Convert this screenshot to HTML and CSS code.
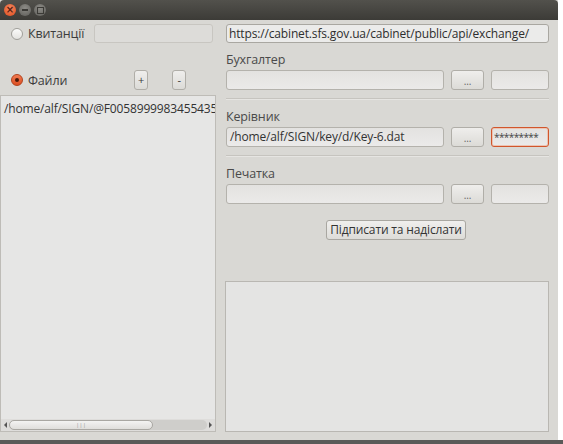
FILE: index.html
```html
<!DOCTYPE html>
<html>
<head>
<meta charset="utf-8">
<link rel="stylesheet" href="styles.css">
</head>
<body>
<div class="window">
  <div class="titlebar">
    <span class="tb-btn tb-close">×</span>
    <span class="tb-btn tb-min"><span class="tb-min-line"></span></span>
    <span class="tb-btn tb-max"><span class="tb-max-box"></span></span>
  </div>
  <div class="content">
    <div class="left">
      <div class="row-kv">
        <span class="radio"></span>
        <span class="radio-label">Квитанції</span>
        <span class="field field-kv"></span>
      </div>
      <div class="row-files">
        <span class="radio radio-on"><span class="radio-dot"></span></span>
        <span class="radio-label">Файли</span>
        <span class="small-btn btn-plus">+</span>
        <span class="small-btn btn-minus">-</span>
      </div>
      <div class="list">
        <div class="list-body">
          <div class="list-item">/home/alf/SIGN/@F0058999983455435</div>
        </div>
        <div class="hscroll">
          <span class="arrow arrow-left"></span>
          <div class="trough">
            <div class="thumb"><span class="grip">|||</span></div>
          </div>
          <span class="arrow arrow-right"></span>
        </div>
      </div>
    </div>
    <div class="right">
      <div class="field field-url">https://cabinet.sfs.gov.ua/cabinet/public/api/exchange/</div>
      <div class="label label-first">Бухгалтер</div>
      <div class="key-row">
        <div class="field field-path"></div>
        <div class="dots-btn">...</div>
        <div class="field field-pass"></div>
      </div>
      <div class="sep"></div>
      <div class="label">Керівник</div>
      <div class="key-row">
        <div class="field field-path">/home/alf/SIGN/key/d/Key-6.dat</div>
        <div class="dots-btn">...</div>
        <div class="field field-pass field-focus">*********</div>
      </div>
      <div class="sep"></div>
      <div class="label">Печатка</div>
      <div class="key-row">
        <div class="field field-path"></div>
        <div class="dots-btn">...</div>
        <div class="field field-pass"></div>
      </div>
      <div class="send-row">
        <div class="send-btn">Підписати та надіслати</div>
      </div>
      <div class="log"></div>
    </div>
  </div>
</div>
<div class="bottom-strip"></div>
</body>
</html>
```
FILE: styles.css
```css
html, body {
  margin: 0;
  padding: 0;
  background: #ffffff;
  width: 563px;
  height: 444px;
  overflow: hidden;
}
body {
  font-family: "Open Sans", "DejaVu Sans", sans-serif;
  font-size: 12px;
  letter-spacing: -0.15px;
  color: #3c3c3c;
}
.window {
  width: 558px;
  height: 440px;
  background: #d9d8d4;
  display: flex;
  flex-direction: column;
}
.bottom-strip {
  width: 563px;
  height: 4px;
  background: #5a5a58;
}
.titlebar {
  height: 20px;
  background: linear-gradient(#52514c, #3c3b37);
  display: flex;
  align-items: center;
  padding-left: 4px;
  gap: 3px;
  border-radius: 4px 4px 0 0;
}
.tb-btn {
  width: 12px;
  height: 12px;
  border-radius: 50%;
  display: flex;
  align-items: center;
  justify-content: center;
  box-sizing: border-box;
}
.tb-close {
  background: radial-gradient(circle at 50% 35%, #f48a62, #df4a1c);
  color: #5a2010;
  font-size: 10px;
  line-height: 12px;
  font-family: "DejaVu Sans", sans-serif;
  font-weight: bold;
  letter-spacing: 0;
}
.tb-min, .tb-max {
  background: radial-gradient(circle at 50% 35%, #8d8c87, #5e5d59);
}
.tb-min-line {
  width: 6px;
  height: 2px;
  background: #3b3a36;
}
.tb-max-box {
  width: 5px;
  height: 5px;
  border: 1px solid #3b3a36;
}
.content {
  flex: 1;
  display: flex;
}
.left {
  width: 216px;
  display: flex;
  flex-direction: column;
}
.row-kv {
  height: 19px;
  margin-top: 4px;
  display: flex;
  align-items: center;
  padding-left: 11px;
}
.radio {
  width: 12px;
  height: 12px;
  border-radius: 50%;
  border: 1px solid #a09f9a;
  background: linear-gradient(#fbfbfa, #e4e3e0);
  box-sizing: border-box;
  display: flex;
  align-items: center;
  justify-content: center;
  flex: none;
}
.radio-on {
  border-color: #b2421c;
  background: linear-gradient(#f27b52, #dc4f22);
}
.radio-dot {
  width: 4px;
  height: 4px;
  border-radius: 50%;
  background: #4a1a0a;
}
.radio-label {
  margin-left: 5px;
  font-size: 12.5px;
  color: #3c3c3c;
}
.field {
  box-sizing: border-box;
  border: 1px solid #b4b2ac;
  border-radius: 3px;
  background: linear-gradient(#e3e2e0, #ebeae9);
  height: 20px;
  line-height: 18px;
  padding: 0 3px;
  font-size: 12px;
  color: #333;
  white-space: nowrap;
  overflow: hidden;
}
.field-kv {
  margin-left: auto;
  margin-right: 3px;
  width: 119px;
  height: 19px;
  background: #dddcd9;
  border-color: #c8c6c1;
}
.row-files {
  height: 20px;
  margin-top: 27px;
  display: flex;
  align-items: center;
  padding-left: 11px;
}
.small-btn {
  box-sizing: border-box;
  width: 14px;
  height: 20px;
  border: 1px solid #b0aea8;
  border-radius: 3px;
  background: linear-gradient(#efeeec, #dcdbd7);
  font-size: 11px;
  line-height: 18px;
  text-align: center;
  color: #3a3a3a;
  letter-spacing: 0;
}
.btn-plus {
  margin-left: 67px;
}
.btn-minus {
  margin-left: 24px;
}
.list {
  margin-top: 5px;
  width: 216px;
  height: 337px;
  box-sizing: border-box;
  border: 1px solid #bebcb7;
  background: #e6e6e5;
  display: flex;
  flex-direction: column;
}
.list-body {
  flex: 1;
  overflow: hidden;
}
.list-item {
  padding-left: 3px;
  padding-top: 4px;
  white-space: nowrap;
  font-size: 12px;
  color: #333;
}
.hscroll {
  height: 12px;
  display: flex;
  align-items: center;
  padding: 0 2px 0 2px;
  background: #dedddb;
}
.arrow {
  width: 0;
  height: 0;
  border-top: 3px solid transparent;
  border-bottom: 3px solid transparent;
  flex: none;
}
.arrow-left {
  border-right: 3px solid #555;
  margin: 0 2px 0 1px;
}
.arrow-right {
  border-left: 3px solid #555;
  margin: 0 1px 0 2px;
}
.trough {
  flex: 1;
  height: 10px;
  background: #cfcecb;
  border-radius: 5px;
  display: flex;
}
.thumb {
  width: 144px;
  height: 10px;
  box-sizing: border-box;
  border: 1px solid #a9a7a2;
  border-radius: 5px;
  background: linear-gradient(#f3f3f2, #dfdedb);
  display: flex;
  align-items: center;
  justify-content: center;
}
.grip {
  font-size: 6px;
  line-height: 6px;
  color: #999;
  letter-spacing: 0;
}
.right {
  flex: 1;
  padding: 4px 9px 0 10px;
  display: flex;
  flex-direction: column;
}
.field-url {
  width: 323px;
  height: 19px;
  padding: 0 2px;
  line-height: 17px;
  color: #2e2e2e;
  background: #ebebea;
  border-color: #a9a7a1;
}
.label {
  font-size: 12.5px;
  color: #4a4a4a;
  height: 18px;
  line-height: 18px;
  margin-top: 8px;
}
.key-row {
  display: flex;
  align-items: center;
  margin-top: 1px;
  height: 20px;
}
.field-path {
  width: 218px;
}
.dots-btn {
  box-sizing: border-box;
  width: 33px;
  height: 20px;
  margin-left: 7px;
  border: 1px solid #b0aea8;
  border-radius: 3px;
  background: linear-gradient(#efeeec, #dcdbd7);
  font-size: 10px;
  line-height: 20px;
  text-align: center;
  color: #666;
}
.field-pass {
  width: 58px;
  margin-left: 7px;
  font-size: 10px;
  line-height: 18px;
  letter-spacing: -0.6px;
  padding: 0 2px;
  color: #444;
}
.field-focus {
  border: 1px solid #d1562c;
  box-shadow: inset 0 0 0 1px #edc3b2;
}
.sep {
  height: 1px;
  background: #c6c4bf;
  border-bottom: 1px solid #e6e5e2;
  margin-top: 8px;
}
.send-row {
  display: flex;
  margin-top: 16px;
}
.send-btn {
  margin-left: 100px;
  box-sizing: border-box;
  height: 20px;
  width: 140px;
  text-align: center;
  border: 1px solid #a9a7a1;
  border-radius: 3px;
  background: linear-gradient(#f0efed, #dddcd8);
  font-size: 12px;
  line-height: 18px;
  color: #333;
  white-space: nowrap;
}
.log {
  margin-top: 41px;
  margin-left: -1px;
  width: 324px;
  height: 151px;
  box-sizing: border-box;
  border: 1px solid #b9b7b2;
  background: #e4e4e3;
}
```
